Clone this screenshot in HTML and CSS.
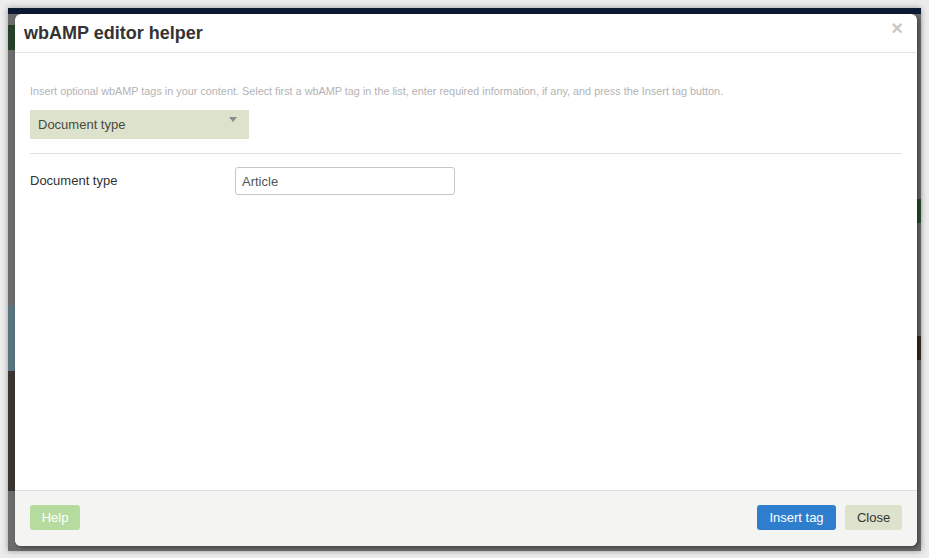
FILE: index.html
```html
<!DOCTYPE html>
<html lang="en">
<head>
  <meta charset="UTF-8">
  <title>wbAMP editor helper</title>
  <link rel="stylesheet" href="styles.css">
</head>
<body>

  <!-- Dimmed page behind the dialog -->
  <div class="screen">

    <div class="modal">
      <div class="modal-header">
        <h3 class="modal-title">wbAMP editor helper</h3>
        <span class="modal-close">&times;</span>
      </div>

      <div class="modal-body">
        <p class="help-text">Insert optional wbAMP tags in your content. Select first a wbAMP tag in the list, enter required information, if any, and press the Insert tag button.</p>

        <div class="tag-select">
          <span>Document type</span>
          <span class="caret"></span>
        </div>

        <hr class="divider">

        <div class="field-row">
          <label class="field-label">Document type</label>
          <input class="field-input" type="text" value="Article">
        </div>
      </div>

      <div class="modal-footer">
        <button class="btn btn-help">Help</button>
        <div class="footer-right">
          <button class="btn btn-primary">Insert tag</button>
          <button class="btn btn-close">Close</button>
        </div>
      </div>
    </div>

  </div>

</body>
</html>
```

FILE: styles.css
```css
body {
  margin: 0;
  background: #ececec;
  font-family: "Liberation Sans", Arial, sans-serif;
}

.screen {
  margin: 8px;
  width: 913px;
  height: 543px;
  box-sizing: border-box;
  padding: 6px 4px 5px 7px;
  box-shadow: 0 0 6px rgba(0,0,0,0.35);
  background:
    linear-gradient(#0d1a33, #0d1a33) 0 0 / 100% 6px no-repeat,
    linear-gradient(#26402a, #26402a) 0 17px / 7px 25px no-repeat,
    linear-gradient(#5a7480, #5a7480) 0 297px / 7px 66px no-repeat,
    linear-gradient(#3a3531, #3a3531) 0 363px / 7px 120px no-repeat,
    linear-gradient(#2b4d2c, #2b4d2c) 100% 191px / 4px 24px no-repeat,
    linear-gradient(#3a2922, #3a2922) 100% 328px / 4px 24px no-repeat,
    #6c6c6c;
}

.modal {
  width: 902px;
  height: 532px;
  background: #fff;
  border-radius: 6px;
  display: flex;
  flex-direction: column;
  overflow: hidden;
  box-shadow: 2px 2px 4px rgba(0,0,0,0.4);
}

.modal-header {
  height: 38px;
  padding: 0 14px 0 9px;
  display: flex;
  align-items: center;
  justify-content: space-between;
  border-bottom: 1px solid #e5e5e5;
}

.modal-title {
  margin: 0;
  font-size: 18px;
  font-weight: bold;
  color: #333;
}

.modal-close {
  font-size: 20px;
  font-weight: bold;
  color: #c8c8c8;
  margin-top: -9px;
}

.modal-body {
  flex: 1;
  padding: 31px 15px 0 15px;
}

.help-text {
  margin: 0;
  font-size: 10.85px;
  line-height: 14px;
  color: #b3b3b3;
}

.tag-select {
  margin-top: 12px;
  width: 219px;
  height: 29px;
  box-sizing: border-box;
  padding: 0 8px;
  background: #dde2cd;
  display: flex;
  align-items: center;
  justify-content: space-between;
  font-size: 13px;
  color: #4a4a3c;
}

.caret {
  width: 0;
  height: 0;
  border-left: 4px solid transparent;
  border-right: 4px solid transparent;
  border-top: 5px solid #8c8c8c;
  margin: -10px 4px 0 0;
}

.divider {
  margin: 14px 0 0 0;
  border: 0;
  border-top: 1px solid #e0e0e0;
}

.field-row {
  margin-top: 13px;
  display: flex;
  align-items: center;
}

.field-label {
  width: 205px;
  font-size: 13px;
  color: #333;
  margin-top: -1px;
}

.field-input {
  width: 220px;
  height: 28px;
  box-sizing: border-box;
  border: 1px solid #c6c6c6;
  border-radius: 3px;
  padding: 0 6px;
  font-family: "Liberation Sans", Arial, sans-serif;
  font-size: 13px;
  color: #555;
}

.modal-footer {
  height: 56px;
  box-sizing: border-box;
  border-top: 1px solid #dedede;
  background: #f4f4f2;
  padding: 14px 15px 0 15px;
  display: flex;
  justify-content: space-between;
  align-items: flex-start;
}

.footer-right {
  display: flex;
  gap: 9px;
}

.btn {
  height: 25px;
  border: none;
  border-radius: 3px;
  padding: 0;
  font-family: "Liberation Sans", Arial, sans-serif;
  font-size: 13px;
  cursor: pointer;
}

.btn-help {
  width: 50px;
  background: #b6db9e;
  color: #fff;
}

.btn-primary {
  width: 79px;
  background: #2f7dcd;
  color: #fff;
}

.btn-close {
  width: 57px;
  background: #dde2cd;
  color: #333;
}
```
